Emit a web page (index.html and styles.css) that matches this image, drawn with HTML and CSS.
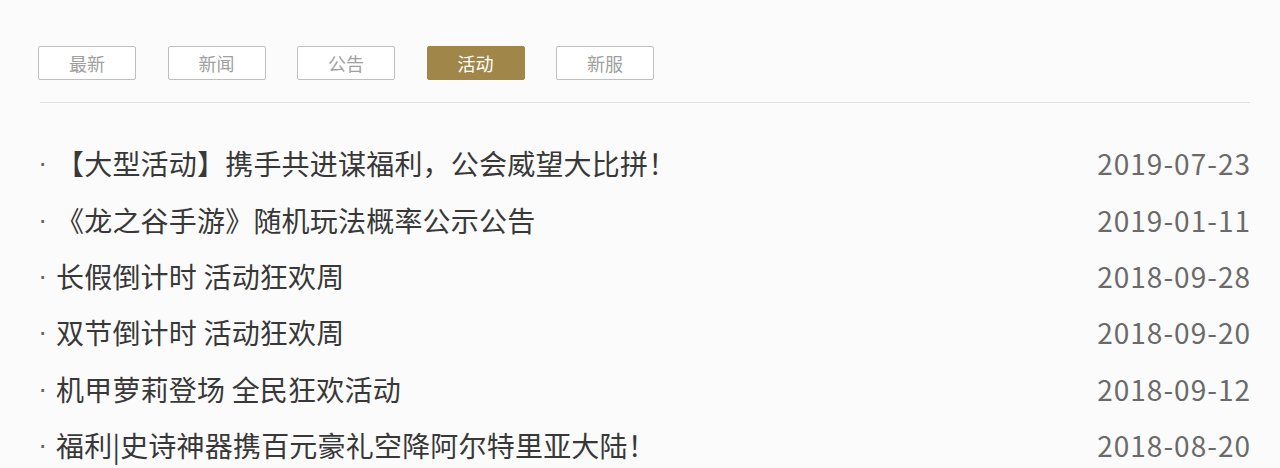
FILE: index.html
```html
<!DOCTYPE html>
<html lang="zh-CN">
<head>
<meta charset="utf-8">
<title>活动</title>
<link rel="stylesheet" href="styles.css">
</head>
<body>
<div class="panel">
  <nav class="tabs">
    <a class="tab">最新</a>
    <a class="tab">新闻</a>
    <a class="tab">公告</a>
    <a class="tab active">活动</a>
    <a class="tab">新服</a>
  </nav>
  <div class="divider"></div>
  <ul class="list">
    <li class="item"><span class="dot">·</span><span class="title">【大型活动】携手共进谋福利，公会威望大比拼！</span><span class="date">2019-07-23</span></li>
    <li class="item"><span class="dot">·</span><span class="title">《龙之谷手游》随机玩法概率公示公告</span><span class="date">2019-01-11</span></li>
    <li class="item"><span class="dot">·</span><span class="title">长假倒计时 活动狂欢周</span><span class="date">2018-09-28</span></li>
    <li class="item"><span class="dot">·</span><span class="title">双节倒计时 活动狂欢周</span><span class="date">2018-09-20</span></li>
    <li class="item"><span class="dot">·</span><span class="title">机甲萝莉登场 全民狂欢活动</span><span class="date">2018-09-12</span></li>
    <li class="item"><span class="dot">·</span><span class="title">福利|史诗神器携百元豪礼空降阿尔特里亚大陆！</span><span class="date">2018-08-20</span></li>
  </ul>
</div>
</body>
</html>
```
FILE: styles.css
```css
html, body {
  margin: 0;
  padding: 0;
  background: #fbfbfb;
  font-family: "Noto Sans CJK SC", "Noto Sans", sans-serif;
}
.panel {
  width: 1212px;
  padding: 46px 0 0 38px;
}
.tabs {
  display: flex;
  gap: 31.5px;
}
.tab {
  box-sizing: border-box;
  width: 98px;
  height: 34px;
  border: 1px solid #bfbfbf;
  border-radius: 2px;
  background: #fff;
  color: #a0a0a0;
  font-size: 18px;
  display: flex;
  align-items: center;
  justify-content: center;
}
.tab.active {
  background: #a1864a;
  border-color: #a1864a;
  color: #fff;
}
.divider {
  margin: 22px 0 0 2px;
  height: 1px;
  background: #e2e2e2;
}
.list {
  list-style: none;
  margin: 0;
  padding: 32px 0 0 0;
}
.item {
  display: flex;
  align-items: center;
  height: 56.4px;
  font-size: 28px;
  color: #383838;
}
.dot {
  width: 18px;
  flex: none;
  font-family: "Liberation Sans", sans-serif;
  color: #666;
}
.title {
  flex: 1;
  white-space: nowrap;
  letter-spacing: 0.2px;
}
.date {
  color: #6a6a6a;
  font-size: 28px;
  letter-spacing: 1px;
  margin-right: -1px;
}
```
